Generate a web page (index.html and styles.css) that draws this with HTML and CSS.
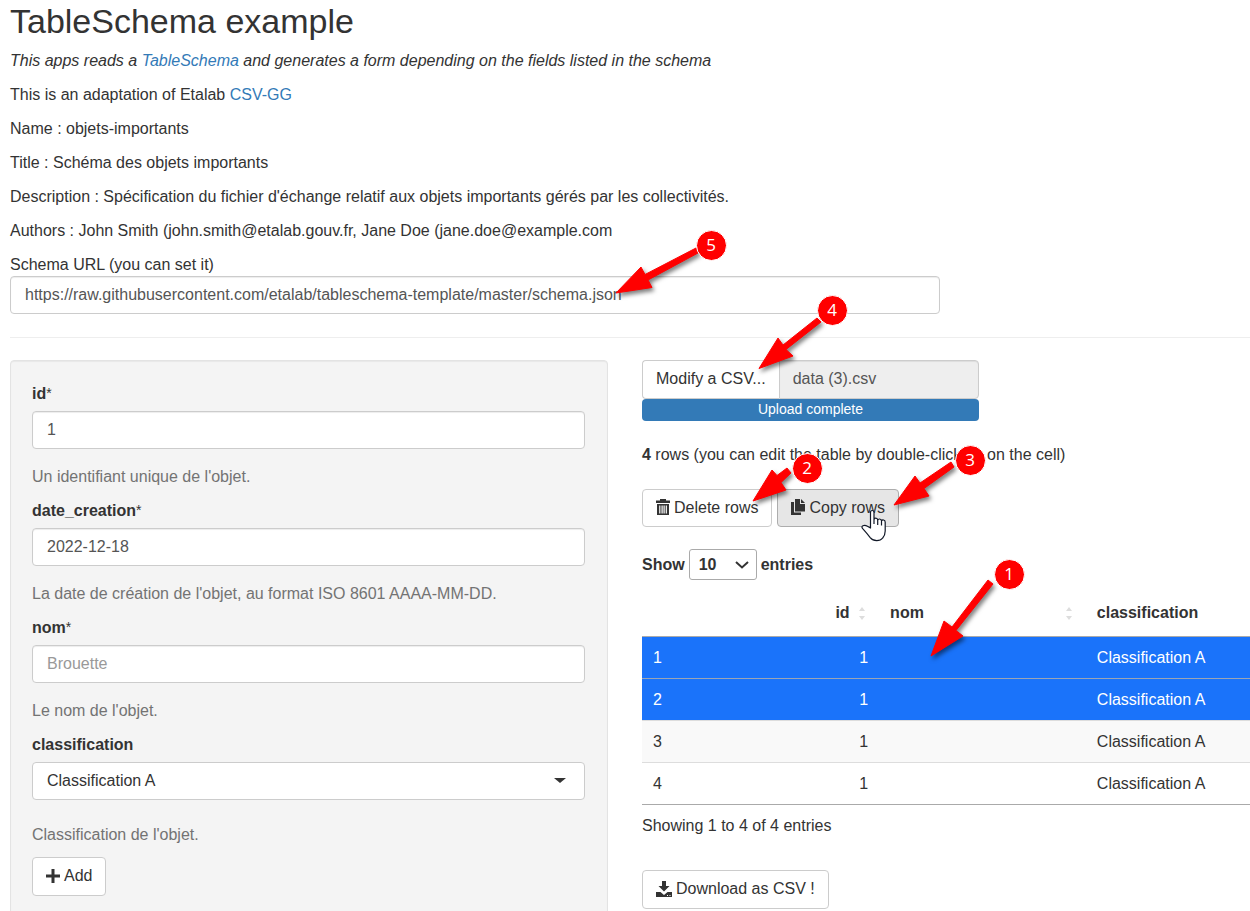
FILE: index.html
```
<!DOCTYPE html>
<html lang="en">
<head>
<meta charset="utf-8">
<title>TableSchema example</title>
<link rel="stylesheet" href="styles.css">
</head>
<body>
<main class="page">
  <h2 class="title">TableSchema example</h2>
  <p class="intro">This apps reads a <a href="#">TableSchema</a> and generates a form depending on the fields listed in the schema</p>
  <p>This is an adaptation of Etalab <a href="#">CSV-GG</a></p>
  <p>Name : objets-importants</p>
  <p>Title : Schéma des objets importants</p>
  <p>Description : Spécification du fichier d'échange relatif aux objets importants gérés par les collectivités.</p>
  <p>Authors : John Smith (john.smith@etalab.gouv.fr, Jane Doe (jane.doe@example.com</p>
  <div class="schema-url">
    <label for="schema">Schema URL (you can set it)</label>
    <input class="control" id="schema" type="text" value="https://raw.githubusercontent.com/etalab/tableschema-template/master/schema.json">
  </div>
  <hr class="rule">
  <div class="columns">
    <form class="well">
      <div class="field">
        <label for="id">id<sup>*</sup></label>
        <input class="control" id="id" type="text" value="1">
        <p class="help">Un identifiant unique de l'objet.</p>
      </div>
      <div class="field">
        <label for="date">date_creation<sup>*</sup></label>
        <input class="control" id="date" type="text" value="2022-12-18">
        <p class="help">La date de création de l'objet, au format ISO 8601 AAAA-MM-DD.</p>
      </div>
      <div class="field">
        <label for="nom">nom<sup>*</sup></label>
        <input class="control" id="nom" type="text" placeholder="Brouette">
        <p class="help">Le nom de l'objet.</p>
      </div>
      <div class="field field-select">
        <label for="classification">classification</label>
        <div class="select-wrap">
          <select class="control" id="classification"><option>Classification A</option></select>
          <span class="caret"></span>
        </div>
        <p class="help">Classification de l'objet.</p>
      </div>
      <button class="btn" type="button">
        <svg class="icon" viewBox="0 0 14 16"><path d="M5.500 1h3v5.500H14v3H8.500V15h-3V9.500H0v-3h5.500z"/></svg>Add
      </button>
    </form>
    <section class="data">
      <div class="upload">
        <div class="upload-group">
          <button class="btn upload-btn" type="button">Modify a CSV...</button>
          <input class="control upload-name" type="text" aria-label="File name" value="data (3).csv" readonly>
        </div>
        <div class="progress">Upload complete</div>
      </div>
      <p class="count"><b>4</b> rows (you can edit the table by double-clicking on the cell)</p>
      <div class="actions">
        <button class="btn" type="button">
          <svg class="icon" viewBox="0 0 14 16"><path fill-rule="evenodd" d="M4 0h6v1.500h4V4H0V1.500h4zM1 5h12v11H1zM3.200 6.500v8h1.200v-8zM5.500 6.500v8h1.200v-8zM7.500 6.500v8h1.200v-8zM9.700 6.500v8h1.200v-8z"/></svg>Delete rows
        </button>
        <button class="btn btn-hover" type="button">
          <svg class="icon" viewBox="0 0 14 16"><path d="M0 3h3v10.500h7V16H0zM4 0h5v5h5v7.500H4zM10 0l4 4h-4z"/></svg>Copy rows
        </button>
      </div>
      <div class="length">
        <label for="length">Show</label>
        <div class="length-wrap">
          <select class="length-select" id="length"><option>10</option></select>
          <svg class="chevron" viewBox="0 0 14 8"><path d="M1 1l6 5.500L13 1" fill="none" stroke="#333" stroke-width="2"/></svg>
        </div>
        <span>entries</span>
      </div>
      <table class="table">
        <colgroup><col class="c-row"><col class="c-id"><col class="c-nom"><col class="c-class"></colgroup>
        <thead>
          <tr><th></th><th class="num sort">id</th><th class="sort">nom</th><th>classification</th></tr>
        </thead>
        <tbody>
          <tr class="selected"><td>1</td><td class="num">1</td><td></td><td>Classification A</td></tr>
          <tr class="selected"><td>2</td><td class="num">1</td><td></td><td>Classification A</td></tr>
          <tr class="odd"><td>3</td><td class="num">1</td><td></td><td>Classification A</td></tr>
          <tr><td>4</td><td class="num">1</td><td></td><td>Classification A</td></tr>
        </tbody>
      </table>
      <p class="info">Showing 1 to 4 of 4 entries</p>
      <button class="btn" type="button">
        <svg class="icon icon-wide" viewBox="0 0 16 16"><path fill-rule="evenodd" d="M6 0h4v5h3.500L8 10.500 2.500 5H6zM0 11h4.500L8 14l3.500-3H16V16H0zM11 14v1h1v-1zM13.500 14v1h1v-1z"/></svg>Download as CSV !
      </button>
    </section>
  </div>
  <svg class="callouts" width="1250" height="911" viewBox="0 0 1250 911">
    <path class="cursor" d="M870.500 528V512.500q0-2 1.700-2t1.800 2V520q0-1.800 1.800-1.800t1.900 2q.4-1.300 2-1.200t1.800 2q.5-1.200 2-1 1.700.2 1.700 2.300V531q0 4-2.500 7-2 2.700-6 2.700t-6.500-3q-3-4-7.500-9-1.600-2 .2-3 2-1 4.500.5zM874 520v4M877.700 520v5M881.500 521.500v4"/>
    <g class="arrows">
      <path d="M616 293L641 267 645 274.500 696 248 698 253 648 280 652 287.500z"/>
      <path d="M759 368.500L778 338 783 345 817 318 821 322 786 349.500 793 356z"/>
      <path d="M753 501L772 470 777 475.500 787 468 791 473 781 482.500 786 490z"/>
      <path d="M894 505L915 476 920 483 951 462 954 467 924 488.500 929 496z"/>
      <path d="M931 656L944 621 952 627 988 580 993 584 956 630.500 963 636z"/>
    </g>
    <g class="badges">
      <circle cx="711.500" cy="245.500" r="15"/><text x="711" y="251">5</text>
      <circle cx="832.500" cy="310.500" r="15"/><text x="832" y="316">4</text>
      <circle cx="807.500" cy="468.500" r="15"/><text x="807" y="474">2</text>
      <circle cx="970.500" cy="460.500" r="15"/><text x="970" y="466">3</text>
      <circle cx="1009.500" cy="574.500" r="15"/><text x="1009" y="580">1</text>
    </g>
  </svg>
</main>
</body>
</html>
```
FILE: styles.css
```
* { box-sizing: border-box; }
body {
  margin: 0;
  color: #333;
  background: #fff;
  font: 16px/23px "Liberation Sans", Arial, sans-serif;
  overflow: hidden;
}
.page { position: relative; padding-left: 10px; }
a { color: #337ab7; text-decoration: none; }
p { margin: 0 0 11px; }
.title { margin: 0 0 8px; padding-top: 1px; font-size: 34px; line-height: 40px; font-weight: 400; }
.intro { font-style: italic; }
.schema-url { width: 75%; }
.schema-url label { display: block; }
.control {
  display: block;
  width: 100%;
  height: 38px;
  padding: 0 14px 1px;
  border: 1px solid #ccc;
  border-radius: 4px;
  background: #fff;
  box-shadow: inset 0 1px 1px rgba(0, 0, 0, .075);
  color: #555;
  font: inherit;
}
.control::placeholder { color: #999; }
.rule { margin: 23px 0 22px; border: 0; border-top: 1px solid #eee; }
.columns { display: grid; grid-template-columns: 598fr 608fr; gap: 34px; }
.well {
  padding: 21px 22px 21px 21px;
  border: 1px solid #e3e3e3;
  border-radius: 4px;
  background: #f4f4f4;
  box-shadow: inset 0 1px 1px rgba(0, 0, 0, .05);
}
.field label { display: block; margin-bottom: 6px; font-weight: 700; }
.field sup { font-size: 14px; line-height: 0; font-weight: 400; vertical-align: 1px; }
.help { margin: 16px 0 11px; color: #737373; }
.field-select .help { margin-top: 23px; }
.select-wrap, .length-wrap { position: relative; }
.select-wrap .control { appearance: none; padding-bottom: 2px; color: #333; box-shadow: none; }
.caret {
  position: absolute;
  top: 16px;
  right: 19px;
  border: 6px solid transparent;
  border-top: 5px solid #333;
  border-bottom: 0;
}
.btn {
  display: inline-flex;
  align-items: center;
  gap: 4px;
  height: 39px;
  padding: 0 13px 2px;
  border: 1px solid #ccc;
  border-radius: 4px;
  background: #fff;
  color: #333;
  font: inherit;
  white-space: nowrap;
}
.btn-hover { background: #e6e6e6; border-color: #adadad; }
.icon { width: 14px; height: 16px; fill: currentColor; }
.icon-wide { width: 16px; }
.upload { width: 337px; max-width: 100%; }
.upload-group { display: flex; }
.upload-btn { border-radius: 4px 0 0 4px; border-right: 0; }
.upload-name { flex: 1; min-width: 0; height: 39px; padding: 0 13px 2px; border-radius: 0 4px 4px 0; background: #eee; }
.progress {
  height: 22px;
  border-radius: 4px;
  background: #337ab7;
  color: #fff;
  font-size: 14px;
  line-height: 21px;
  text-align: center;
}
.count { margin: 22px 0 23px; }
.actions { display: flex; gap: 5px; margin-bottom: 22px; }
.actions .btn { height: 38px; }
.length { display: flex; align-items: center; gap: 4px; font-weight: 700; }
.length-select {
  display: block;
  appearance: none;
  width: 68px;
  height: 31px;
  padding: 0 9px;
  border: 1px solid #aaa;
  border-radius: 3px;
  background: #fff;
  color: #333;
  font: inherit;
}
.chevron { position: absolute; top: 12px; right: 8px; width: 14px; height: 8px; }
.table { width: 100%; margin-top: 10px; table-layout: fixed; border-collapse: separate; border-spacing: 0; border-bottom: 1px solid #aaa; }
.c-row { width: 30%; }
.c-id { width: 9%; }
.c-nom { width: 34%; }
.table th { position: relative; padding: 11px 11px 12px; border-bottom: 1px solid #aaa; text-align: left; white-space: nowrap; }
.table td { padding: 9px 11px; border-top: 1px solid #ddd; }
.table tbody tr:first-child td { border-top: 0; }
.table .num { text-align: right; }
.table th.num { padding-right: 30px; }
.sort::before, .sort::after { content: ""; position: absolute; right: 14px; border: 3px solid transparent; }
.sort::before { top: 17px; border-top: 0; border-bottom: 4px solid #ddd; }
.sort::after { top: 26px; border-bottom: 0; border-top: 4px solid #ddd; }
.table .selected td { background: #1a73fa; color: #fff; border-color: #9aa5b5; }
.odd td { background: #f9f9f9; }
.info { margin: 9px 0 33px; }
.callouts { position: absolute; top: 0; left: 0; pointer-events: none; }
.cursor { fill: #fff; stroke: #111827; stroke-width: 1.2px; stroke-linejoin: round; }
.arrows { fill: #f00; stroke: #f00; stroke-width: 1px; filter: drop-shadow(2px 3px 2px rgba(0, 0, 0, .5)); }
.badges circle { fill: #f00; stroke: #fff; stroke-width: 1px; }
.badges text { fill: #fff; font: 17px "Open Sans", sans-serif; text-anchor: middle; }
```
